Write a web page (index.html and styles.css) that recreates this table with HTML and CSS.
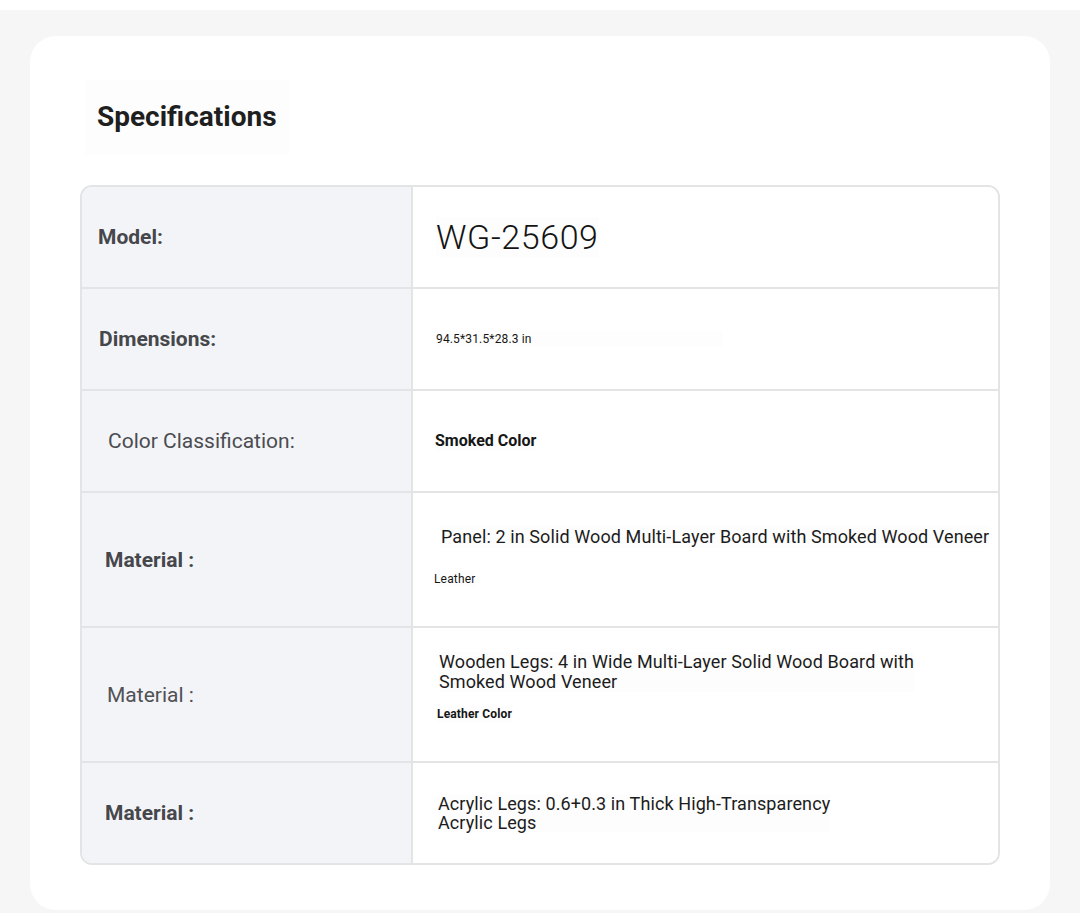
FILE: index.html
```html
<!DOCTYPE html>
<html lang="en">
<head>
<meta charset="utf-8">
<title>Specifications</title>
<link rel="stylesheet" href="styles.css">
</head>
<body>
<div class="page">
  <section class="card">
    <h2 class="title">Specifications</h2>
    <div class="spec-table">
      <div class="row">
        <div class="label pl-16"><span class="label-text bold">Model:</span></div>
        <div class="value pl-23"><span class="val val-model">WG-25609</span></div>
      </div>
      <div class="row">
        <div class="label pl-17"><span class="label-text bold">Dimensions:</span></div>
        <div class="value pl-23"><span class="val val-small val-dims">94.5*31.5*28.3 in</span></div>
      </div>
      <div class="row">
        <div class="label pl-26"><span class="label-text">Color Classification:</span></div>
        <div class="value pl-22"><span class="val val-bold16">Smoked Color</span></div>
      </div>
      <div class="row row-tall">
        <div class="label pl-23"><span class="label-text bold">Material :</span></div>
        <div class="value value-stack stack-panel">
          <span class="val val-18 ml-28">Panel: 2 in Solid Wood Multi-Layer Board with Smoked Wood Veneer</span>
          <span class="val val-small ml-21 gap-23">Leather</span>
        </div>
      </div>
      <div class="row row-tall">
        <div class="label pl-25"><span class="label-text light">Material :</span></div>
        <div class="value value-stack stack-legs">
          <span class="val val-18 lh-20 ml-26">Wooden Legs: 4 in Wide Multi-Layer Solid Wood Board with<br>Smoked Wood Veneer</span>
          <span class="val val-small bold ml-24 gap-14">Leather Color</span>
        </div>
      </div>
      <div class="row row-last">
        <div class="label pl-23"><span class="label-text bold">Material :</span></div>
        <div class="value pl-25"><span class="val val-18 lh-19">Acrylic Legs: 0.6+0.3 in Thick High-Transparency<br>Acrylic Legs</span></div>
      </div>
    </div>
  </section>
</div>
</body>
</html>
```

FILE: styles.css
```css
html, body {
  margin: 0;
  padding: 0;
  background: #ffffff;
  overflow: hidden;
}

body {
  font-family: Roboto, "Liberation Sans", Arial, sans-serif;
  color: #1a1a1a;
}

.page {
  margin-top: 10px;
  background: #f6f6f6;
  padding: 26px 30px 3px 30px;
}

.card {
  background: #ffffff;
  border-radius: 26px;
  padding: 44px 50px 46px 50px;
  height: 874px;
  box-sizing: border-box;
}

.title {
  display: inline-block;
  margin: 0 0 30px 5px;
  padding: 0 12px;
  height: 75px;
  line-height: 73px;
  font-size: 28px;
  font-weight: 700;
  color: #1f1f1f;
  background: #fdfdfd;
}

.spec-table {
  border: 2px solid #e3e4e6;
  border-radius: 12px;
  overflow: hidden;
  display: flex;
  flex-direction: column;
}

.row {
  display: grid;
  grid-template-columns: 331px 1fr;
  height: 102px;
  box-sizing: border-box;
  border-bottom: 2px solid #e3e4e6;
}

.row-tall {
  height: 135px;
}

.row-last {
  height: 100px;
  border-bottom: none;
}

.label {
  background: #f3f4f8;
  border-right: 2px solid #e3e4e6;
  display: flex;
  align-items: center;
}

.label-text {
  font-size: 21px;
  font-weight: 400;
  color: #4b4c50;
  line-height: 24px;
}

.label-text.bold {
  font-weight: 700;
  color: #46474b;
}

.label-text.light {
  color: #505155;
}

.value {
  display: flex;
  align-items: center;
  background: #ffffff;
}

.value-stack {
  flex-direction: column;
  align-items: flex-start;
  justify-content: flex-start;
}

.stack-panel {
  padding-top: 33px;
}

.stack-legs {
  padding-top: 24px;
}

.val {
  color: #161616;
  background: #fdfdfd;
}

.val-model {
  font-size: 34px;
  font-weight: 300;
  line-height: 40px;
  color: #141414;
  letter-spacing: 0.6px;
}

.val-small {
  font-size: 12px;
  line-height: 16px;
  letter-spacing: 0.15px;
}

.val-small.bold {
  font-weight: 700;
}

.val-dims {
  padding-right: 190px;
}

.val-bold16 {
  font-size: 16px;
  font-weight: 700;
  line-height: 20px;
}

.val-18 {
  font-size: 18px;
  line-height: 22px;
  color: #1c1c1c;
  letter-spacing: 0.1px;
}

.lh-20 { line-height: 20px; }
.lh-19 { line-height: 19px; }

.pl-16 { padding-left: 16px; }
.pl-17 { padding-left: 17px; }
.pl-22 { padding-left: 22px; }
.pl-23 { padding-left: 23px; }
.pl-25 { padding-left: 25px; }
.pl-26 { padding-left: 26px; }

.ml-21 { margin-left: 21px; }
.ml-24 { margin-left: 24px; }
.ml-26 { margin-left: 26px; }
.ml-28 { margin-left: 28px; }

.gap-23 { margin-top: 23px; }
.gap-14 { margin-top: 14px; }
```
